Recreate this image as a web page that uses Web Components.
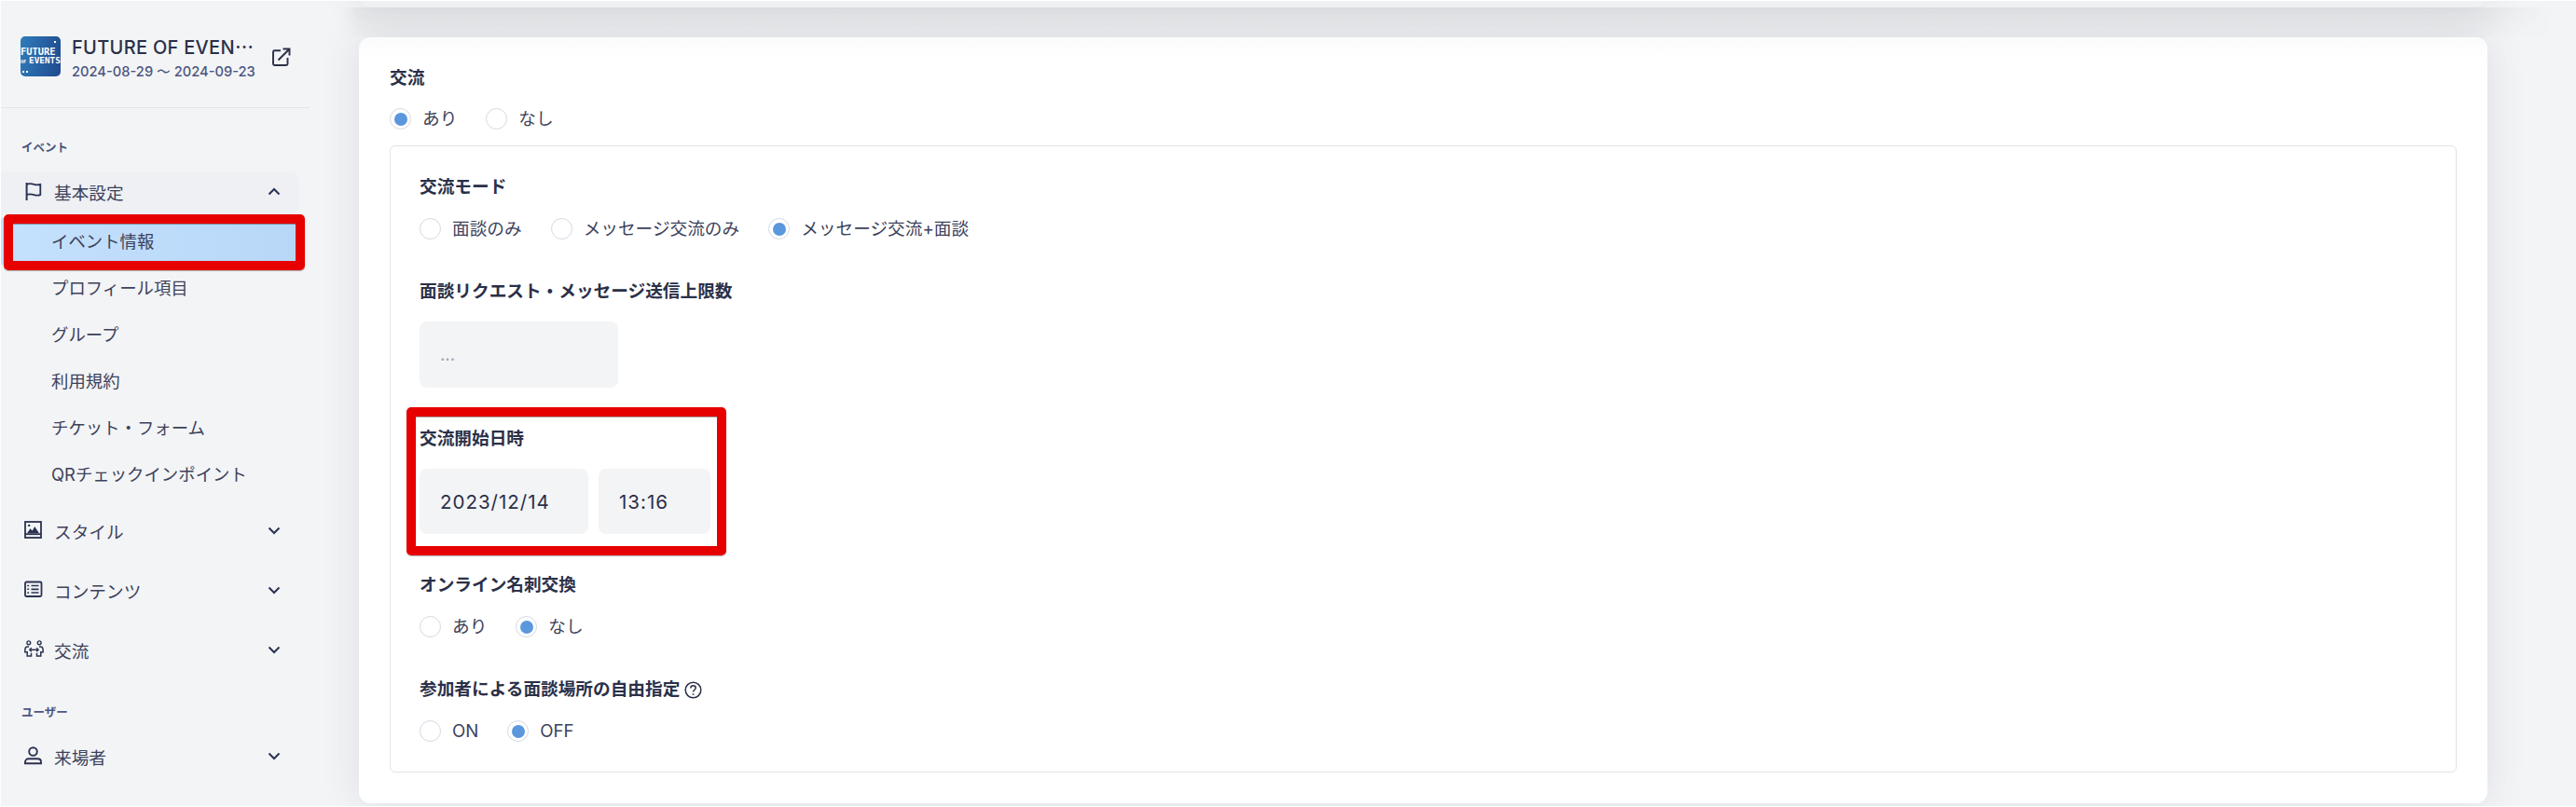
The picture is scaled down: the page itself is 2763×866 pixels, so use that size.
<!DOCTYPE html>
<html lang="ja">
<head>
<meta charset="utf-8">
<title>イベント情報</title>
<style>
  html, body { margin: 0; height: 100%; background: #fff; }
  body {
    font-family: Inter, "Noto Sans CJK JP", sans-serif;
    color: #2b3048;
    overflow: hidden;
  }
</style>
</head>
<body>

<event-shell>
  <event-sidebar slot="side">
    <event-head title-text="FUTURE OF EVEN⋯" dates="2024-08-29 〜 2024-09-23"></event-head>

    <nav-label>イベント</nav-label>
    <nav-group icon="flag" open>基本設定</nav-group>
    <nav-list>
      <nav-item selected>イベント情報<red-mark style="left:3px;top:-4px;width:323px;height:60px"></red-mark></nav-item>
      <nav-item>プロフィール項目</nav-item>
      <nav-item>グループ</nav-item>
      <nav-item>利用規約</nav-item>
      <nav-item>チケット・フォーム</nav-item>
      <nav-item>QRチェックインポイント</nav-item>
    </nav-list>
    <nav-group icon="image">スタイル</nav-group>
    <nav-group icon="list">コンテンツ</nav-group>
    <nav-group icon="people">交流</nav-group>
    <nav-label>ユーザー</nav-label>
    <nav-group icon="user">来場者</nav-group>
  </event-sidebar>

  <settings-card class="main">
    <form-label>交流</form-label>
    <radio-row>
      <radio-option checked>あり</radio-option>
      <radio-option>なし</radio-option>
    </radio-row>

    <settings-box>
      <form-field label="交流モード">
        <radio-row>
          <radio-option>面談のみ</radio-option>
          <radio-option>メッセージ交流のみ</radio-option>
          <radio-option checked>メッセージ交流+面談</radio-option>
        </radio-row>
      </form-field>

      <form-field label="面談リクエスト・メッセージ送信上限数">
        <text-input width="213" height="71" placeholder>...</text-input>
      </form-field>

      <form-field label="交流開始日時">
        <red-mark style="left:-14px;top:-19px;width:343px;height:159px"></red-mark>
        <text-input width="181" height="70">2023/12/14</text-input>
        <text-input width="120" height="70">13:16</text-input>
      </form-field>

      <form-field label="オンライン名刺交換">
        <radio-row>
          <radio-option>あり</radio-option>
          <radio-option checked>なし</radio-option>
        </radio-row>
      </form-field>

      <form-field label="参加者による面談場所の自由指定" help>
        <radio-row>
          <radio-option>ON</radio-option>
          <radio-option checked>OFF</radio-option>
        </radio-row>
      </form-field>
    </settings-box>
  </settings-card>
</event-shell>

<script>
const ICONS = {
  flag: '<path d="M2.600 1v19" stroke-width="2"/><path d="M2.600 2.600c3-.9 5.200-.7 8 .2 2.300.7 4.500.8 6.700.1v11.300c-2.200.7-4.400.6-6.700-.1-2.800-.9-5-1.100-8-.2" stroke-width="1.800"/>',
  image: '<rect x="1" y="1" width="17" height="17" stroke-width="1.800"/><path d="M1 14.200h17" stroke-width="1.800"/><path d="M3 13.200l3.500-5 2.200 2.300 2.500-4.500 4.800 7.200z" fill="currentColor" stroke="none"/><circle cx="5.200" cy="4.900" r="1.200" fill="currentColor" stroke="none"/>',
  list: '<rect x="1" y="1.500" width="17.500" height="15.500" rx="1.500" stroke-width="1.800"/><path d="M7.500 5.500h8M7.500 9.300h8M7.500 13h8" stroke-width="1.700"/><path d="M4.200 4.700v1.600M4.200 8.500v1.600M4.200 12.200v1.600" stroke-width="1.900"/>',
  people: '<circle cx="4.800" cy="2.800" r="1.900" stroke-width="1.400"/><circle cx="16.200" cy="2.800" r="1.900" stroke-width="1.400"/><path d="M5 7H3.300C2 7 1.200 8 1 9.300l-.2 3.400h2.400V17h4.300v-3.200M16 7h1.700c1.300 0 2.100 1 2.300 2.300l.2 3.400h-2.400V17h-4.300v-3.200" stroke-width="1.500"/><path d="M6.300 10.300h8.400" stroke-width="1.500"/><path d="M7.800 8.300l-2 2 2 2M13.200 8.300l2 2-2 2" stroke-width="1.400"/>',
  user: '<circle cx="9.500" cy="5.500" r="4.300" stroke-width="1.900"/><path d="M1 18.200v-1.400c0-2 1.500-3.500 3.500-3.500h10c2 0 3.500 1.500 3.500 3.500v1.400z" stroke-width="1.900"/>'
};

function tpl(html) {
  const t = document.createElement('template');
  t.innerHTML = html;
  return t;
}

class Base extends HTMLElement {
  constructor() {
    super();
    this.attachShadow({ mode: 'open' });
    this.shadowRoot.appendChild(this.constructor.template.content.cloneNode(true));
  }
}

class EventShell extends Base {
  static template = tpl(`
    <style>
      :host { display: block; height: 866px; box-sizing: border-box; padding: 1px 0 1px 1px; }
      .page {
        display: grid; grid-template-columns: 384px 2283px; height: 100%;
        background: #f3f4f6; overflow: hidden;
      }
      .content { display: flex; flex-direction: column; margin-top: -40px; position: relative; }
      .top {
        height: 47px; flex: none; background: #f0f1f3; border-radius: 0 0 12px 12px;
        box-shadow: 0 0 42px rgba(70,75,85,.13); margin-right: 2px;
      }
      .gap {
        height: 32px; flex: none; margin: 0 -70px 0 -20px;
        background: linear-gradient(rgba(70,75,85,.07), rgba(70,75,85,.01));
        -webkit-mask-image: linear-gradient(90deg, transparent, #000 20px, #000 calc(100% - 70px), transparent);
        mask-image: linear-gradient(90deg, transparent, #000 20px, #000 calc(100% - 70px), transparent);
      }
    </style>
    <div class="page">
      <slot name="side"></slot>
      <div class="content"><div class="top"></div><div class="gap"></div><slot></slot></div>
    </div>`);
}

class EventSidebar extends Base {
  static template = tpl(`
    <style>
      :host { display: block; width: 384px; }
    </style>
    <slot></slot>`);
}

class EventHead extends Base {
  static template = tpl(`
    <style>
      :host { display: block; height: 114px; width: 331px; border-bottom: 1px solid #e3e4e9; }
      .wrap { display: flex; padding: 38px 0 0 21px; align-items: flex-start; }
      .logo {
        position: relative;
        width: 43px; height: 43px; border-radius: 5px; flex: none; overflow: hidden;
        background: linear-gradient(100deg, #2f7cba, #1f4a8f);
        color: #fff; font: 700 10.400px/10px "DejaVu Sans Mono", monospace;
        display: flex; flex-direction: column; justify-content: center; white-space: nowrap;
      }
      .logo::before {
        content: ""; position: absolute; left: 2px; top: 37px; width: 2px; height: 2px; background: #fff;
        box-shadow: 4px 0 #fff, 34px -32px #fff;
      }
      .logo span { display: block; }
      .logo small { font-size: 5px; margin-right: 3px; }
      .logo .ev { font-size: 9.400px; }
      .text { margin-left: 12px; width: 197px; }
      .name {
        font-size: 20px; letter-spacing: .3px; font-weight: 500; line-height: 24px; color: #2b3048;
        white-space: nowrap;
      }
      .dates { font-size: 14.700px; font-weight: 500; line-height: 26px; color: #4b5580; white-space: nowrap; margin-top: 1px; }
      svg { margin: 12px 0 0 18px; flex: none; }
    </style>
    <div class="wrap">
      <div class="logo"><span>FUTURE</span><span class="ev"><small>OF</small>EVENTS</span></div>
      <div class="text"><div class="name"></div><div class="dates"></div></div>
      <svg width="20" height="20" viewBox="0 0 20 20" fill="none" stroke="#2b3048" stroke-width="1.900">
        <path d="M9 3.300H2.500a1.500 1.500 0 0 0-1.500 1.500V17.500A1.500 1.500 0 0 0 2.500 19H15a1.500 1.500 0 0 0 1.500-1.500V11"/>
        <path d="M6.500 13.500L18 2M11.500 1.500H18.500V8.500"/>
      </svg>
    </div>`);
  connectedCallback() {
    this.shadowRoot.querySelector('.name').textContent = this.getAttribute('title-text');
    this.shadowRoot.querySelector('.dates').textContent = this.getAttribute('dates');
  }
}

class NavLabel extends Base {
  static template = tpl(`
    <style>
      :host {
        display: block; height: 20px; margin: 32px 0 16px; padding-left: 22px;
        font-size: 12.500px; font-weight: 700; line-height: 22px; color: #4b5580;
      }
    </style>
    <slot></slot>`);
}

class NavGroup extends Base {
  static template = tpl(`
    <style>
      :host {
        display: flex; align-items: center; height: 46px; width: 320px; margin-bottom: 18px;
        box-sizing: border-box; padding: 0 0 3px 25px; border-radius: 0 10px 10px 0;
        font-size: 18.670px; color: #3d425a;
      }
      :host([open]) { background: #eef0f4; margin-bottom: 4px; }
      .icon { width: 21px; height: 21px; flex: none; margin-right: 11px; color: #2b3252; }
      .label { flex: 1; }
      .chev { margin-right: 20px; flex: none; }
      :host([open]) .chev { transform: rotate(180deg); }
    </style>
    <svg class="icon" viewBox="0 0 21 21" fill="none" stroke="currentColor"></svg>
    <span class="label"><slot></slot></span>
    <svg class="chev" width="14" height="9" viewBox="0 0 14 9" fill="none" stroke="#2b3252" stroke-width="2">
      <path d="M1.500 1.500L7 7l5.500-5.500"/>
    </svg>`);
  connectedCallback() {
    this.shadowRoot.querySelector('.icon').innerHTML = ICONS[this.getAttribute('icon')];
  }
}

class NavList extends Base {
  static template = tpl(`
    <style>:host { display: block; margin-bottom: 14px; }</style>
    <slot></slot>`);
}

class NavItem extends Base {
  static template = tpl(`
    <style>
      :host {
        display: block; position: relative; height: 50px; width: 320px; box-sizing: border-box;
        padding-left: 54px; font-size: 18.400px; line-height: 50px; color: #3d425a;
      }
      :host([selected]) { background: linear-gradient(90deg, #c4e1fd, #b8d7f8); }
    </style>
    <slot></slot>`);
}

class RedMark extends Base {
  static template = tpl(`
    <style>
      :host {
        display: block; position: absolute; box-sizing: border-box; z-index: 5;
        border: 10px solid #e60000; border-radius: 5px; pointer-events: none;
        box-shadow: 0 1px 1px rgba(0,0,0,.3), inset 0 1px 0 rgba(0,0,0,.35);
      }
    </style>`);
}

class SettingsCard extends Base {
  static template = tpl(`
    <style>
      :host {
        display: block; background: #fff; border-radius: 12px; height: 822px; box-sizing: border-box;
        padding: 29px 33px 33px 33px; flex: none;
        box-shadow: 0 0 42px rgba(70,75,85,.13);
        background-image: linear-gradient(#fbfbfc, #fff 24px);
      }
    </style>
    <slot></slot>`);
}

class SettingsBox extends Base {
  static template = tpl(`
    <style>
      :host {
        display: flex; flex-direction: column; gap: 40px; margin-top: 16px;
        border: 1px solid #e2e3ea; border-radius: 6px; padding: 29px 31px 31px 31px;
      }
    </style>
    <slot></slot>`);
}

class FormLabel extends Base {
  static template = tpl(`
    <style>
      :host {
        display: flex; align-items: center; height: 28px; margin-bottom: 18px;
        box-sizing: border-box; padding-top: 2px;
        font-size: 18.670px; font-weight: 700; line-height: 28px; color: #2b3048;
      }
    </style>
    <slot></slot>`);
}

class FormField extends Base {
  static template = tpl(`
    <style>
      :host { display: block; position: relative; }
      .label {
        display: flex; align-items: center; height: 28px; margin-bottom: 19px;
        box-sizing: border-box; padding-top: 2px;
        font-size: 18.670px; font-weight: 700; line-height: 28px; color: #2b3048;
      }
      .help { margin-left: 5px; display: none; }
      :host([help]) .help { display: block; }
      .body { display: flex; gap: 11px; }
    </style>
    <div class="label">
      <span class="t"></span>
      <svg class="help" width="19" height="19" viewBox="0 0 19 19" fill="none" stroke="#2b3048" stroke-width="1.500">
        <circle cx="9.500" cy="9.500" r="8.300"/>
        <path d="M6.800 7.400c0-1.600 1.200-2.600 2.700-2.600s2.700 1 2.700 2.400c0 2.100-2.700 2.100-2.700 4.400"/>
        <path d="M9.500 13.300v1.500" stroke-width="1.800"/>
      </svg>
    </div>
    <div class="body"><slot></slot></div>`);
  connectedCallback() {
    this.shadowRoot.querySelector('.t').textContent = this.getAttribute('label');
  }
}

class RadioRow extends Base {
  static template = tpl(`
    <style>:host { display: flex; align-items: center; gap: 31px; height: 25px; }</style>
    <slot></slot>`);
}

class RadioOption extends Base {
  static template = tpl(`
    <style>
      :host {
        display: flex; align-items: center; gap: 12px; font-size: 18.670px; line-height: 25px;
        color: #3d425a; white-space: nowrap;
      }
      .dot {
        width: 23px; height: 23px; box-sizing: border-box; border-radius: 50%;
        border: 1px solid #d5d9e3; background: #fff; display: flex; align-items: center; justify-content: center;
      }
      :host([checked]) .dot::after {
        content: ""; width: 14px; height: 14px; border-radius: 50%; background: #5b97dc;
      }
    </style>
    <span class="dot"></span><span><slot></slot></span>`);
}

class TextInput extends Base {
  static template = tpl(`
    <style>
      :host {
        display: flex; align-items: center; box-sizing: border-box; padding-left: 22px;
        background: #f3f4f6; border-radius: 8px; font-size: 20.500px; letter-spacing: 1px; color: #2b3048;
      }
      :host([placeholder]) { color: #9ca3af; font-size: 18.670px; letter-spacing: 0; }
    </style>
    <slot></slot>`);
  connectedCallback() {
    this.style.width = this.getAttribute('width') + 'px';
    this.style.height = this.getAttribute('height') + 'px';
  }
}

customElements.define('event-shell', EventShell);
customElements.define('event-sidebar', EventSidebar);
customElements.define('event-head', EventHead);
customElements.define('nav-label', NavLabel);
customElements.define('nav-group', NavGroup);
customElements.define('nav-list', NavList);
customElements.define('nav-item', NavItem);
customElements.define('red-mark', RedMark);
customElements.define('settings-card', SettingsCard);
customElements.define('settings-box', SettingsBox);
customElements.define('form-label', FormLabel);
customElements.define('form-field', FormField);
customElements.define('radio-row', RadioRow);
customElements.define('radio-option', RadioOption);
customElements.define('text-input', TextInput);
</script>
</body>
</html>
